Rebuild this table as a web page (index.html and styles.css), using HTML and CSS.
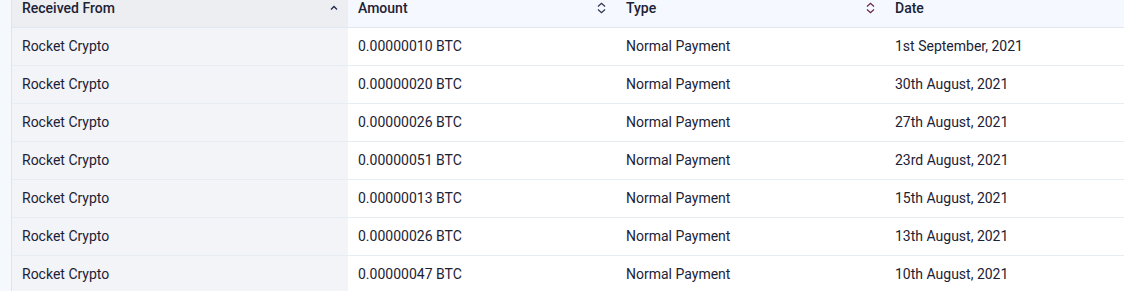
FILE: index.html
```html
<!DOCTYPE html>
<html>
<head>
<meta charset="utf-8">
<link rel="stylesheet" href="styles.css">
</head>
<body>
<div class="page">
  <div class="strip"></div>
  <div class="table">
    <div class="row head">
      <div class="cell c1"><span>Received From</span>
        <svg class="ico" width="8" height="6" viewBox="0 0 8 6"><path d="M1 4.5 L4 1.5 L7 4.5" fill="none" stroke="#1e2a4a" stroke-width="1.3"/></svg>
      </div>
      <div class="cell"><span>Amount</span>
        <svg class="ico" width="9" height="12" viewBox="0 0 9 12"><path d="M1 4.5 L4.5 1.2 L8 4.5 M1 7.5 L4.5 10.8 L8 7.5" fill="none" stroke="#2a3550" stroke-width="1.2"/></svg>
      </div>
      <div class="cell"><span>Type</span>
        <svg class="ico" width="9" height="12" viewBox="0 0 9 12"><path d="M1 4.5 L4.5 1.2 L8 4.5 M1 7.5 L4.5 10.8 L8 7.5" fill="none" stroke="#6a2348" stroke-width="1.2"/></svg>
      </div>
      <div class="cell"><span>Date</span></div>
    </div>
    <div class="row"><div class="cell c1">Rocket Crypto</div><div class="cell">0.00000010 BTC</div><div class="cell">Normal Payment</div><div class="cell">1st September, 2021</div></div>
    <div class="row"><div class="cell c1">Rocket Crypto</div><div class="cell">0.00000020 BTC</div><div class="cell">Normal Payment</div><div class="cell">30th August, 2021</div></div>
    <div class="row"><div class="cell c1">Rocket Crypto</div><div class="cell">0.00000026 BTC</div><div class="cell">Normal Payment</div><div class="cell">27th August, 2021</div></div>
    <div class="row"><div class="cell c1">Rocket Crypto</div><div class="cell">0.00000051 BTC</div><div class="cell">Normal Payment</div><div class="cell">23rd August, 2021</div></div>
    <div class="row"><div class="cell c1">Rocket Crypto</div><div class="cell">0.00000013 BTC</div><div class="cell">Normal Payment</div><div class="cell">15th August, 2021</div></div>
    <div class="row"><div class="cell c1">Rocket Crypto</div><div class="cell">0.00000026 BTC</div><div class="cell">Normal Payment</div><div class="cell">13th August, 2021</div></div>
    <div class="row"><div class="cell c1">Rocket Crypto</div><div class="cell">0.00000047 BTC</div><div class="cell">Normal Payment</div><div class="cell">10th August, 2021</div></div>
  </div>
</div>
</body>
</html>
```

FILE: styles.css
```css
html, body {
  margin: 0;
  padding: 0;
  background: #ffffff;
}
body {
  font-family: Roboto, "Liberation Sans", sans-serif;
  font-size: 14px;
  color: #1c2236;
  overflow: hidden;
}
.page {
  display: flex;
  width: 1124px;
  height: 291px;
}
.strip {
  width: 11px;
  flex: none;
  background: #f5f8fd;
  border-right: 1px solid #dfe4ec;
}
.table {
  flex: 1;
  display: flex;
  flex-direction: column;
}
.row {
  display: grid;
  grid-template-columns: 336px 268px 269px 1fr;
  height: 37px;
  border-bottom: 1px solid #e8edf4;
  flex: none;
}
.row.head {
  height: 27px;
  background: #f5f8fe;
  border-bottom: 1px solid #e2e8f1;
  font-weight: 500;
}
.cell {
  display: flex;
  align-items: center;
  justify-content: space-between;
  padding: 0 10px 2px;
  white-space: nowrap;
}
.head .cell {
  align-items: flex-start;
  padding: 0 10px;
  line-height: 16px;
}
.c1 {
  background: #f3f4f7;
}
.head .c1 {
  background: #eceef2;
}
.ico {
  flex: none;
  margin-top: 2px;
}
.head .c1 .ico {
  margin-top: 5px;
}
```
